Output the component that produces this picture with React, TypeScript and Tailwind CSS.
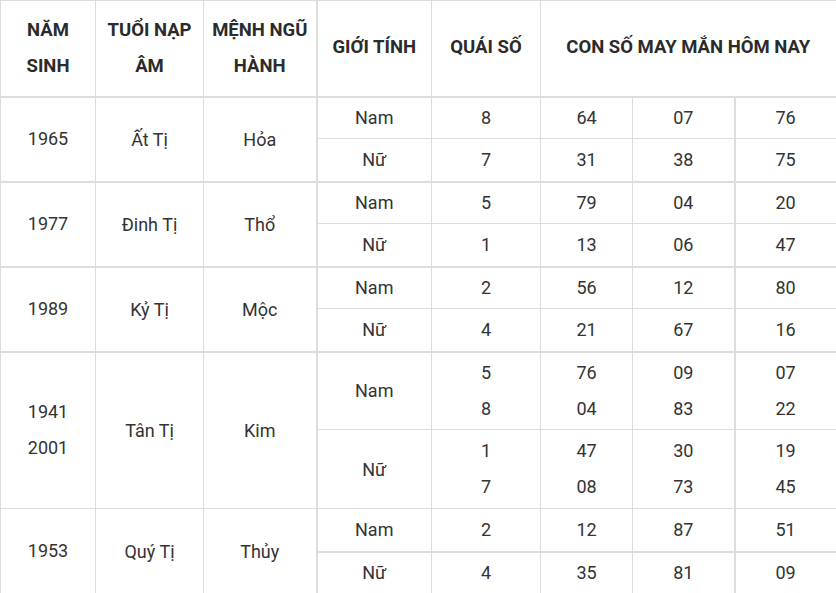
import React from "react";

type Gender = {
  label: string;
  quai: string[];
  nums: string[][];
  h: string;
  thickTop?: boolean;
};

type Group = {
  years: string[];
  napAm: string;
  menh: string;
  thickTop: boolean;
  rows: Gender[];
};

const groups: Group[] = [
  {
    years: ["1965"],
    napAm: "Ất Tị",
    menh: "Hỏa",
    thickTop: true,
    rows: [
      { label: "Nam", quai: ["8"], nums: [["64", "07", "76"]], h: "h-[42px]" },
      { label: "Nữ", quai: ["7"], nums: [["31", "38", "75"]], h: "h-[43px]" }
    ]
  },
  {
    years: ["1977"],
    napAm: "Đinh Tị",
    menh: "Thổ",
    thickTop: true,
    rows: [
      { label: "Nam", quai: ["5"], nums: [["79", "04", "20"]], h: "h-[42px]" },
      { label: "Nữ", quai: ["1"], nums: [["13", "06", "47"]], h: "h-[43px]" }
    ]
  },
  {
    years: ["1989"],
    napAm: "Kỷ Tị",
    menh: "Mộc",
    thickTop: true,
    rows: [
      { label: "Nam", quai: ["2"], nums: [["56", "12", "80"]], h: "h-[42px]" },
      { label: "Nữ", quai: ["4"], nums: [["21", "67", "16"]], h: "h-[43px]" }
    ]
  },
  {
    years: ["1941", "2001"],
    napAm: "Tân Tị",
    menh: "Kim",
    thickTop: true,
    rows: [
      {
        label: "Nam",
        quai: ["5", "8"],
        nums: [
          ["76", "09", "07"],
          ["04", "83", "22"]
        ],
        h: "h-[78px]"
      },
      {
        label: "Nữ",
        quai: ["1", "7"],
        nums: [
          ["47", "30", "19"],
          ["08", "73", "45"]
        ],
        h: "h-[79px]"
      }
    ]
  },
  {
    years: ["1953"],
    napAm: "Quý Tị",
    menh: "Thủy",
    thickTop: false,
    rows: [
      { label: "Nam", quai: ["2"], nums: [["12", "87", "51"]], h: "h-[43px]" },
      { label: "Nữ", quai: ["4"], nums: [["35", "81", "09"]], h: "h-[42px]", thickTop: true }
    ]
  }
];

const cell = "border border-[#dddddd] p-0 text-center align-middle";

function Lines({ items }: { items: string[] }) {
  return (
    <>
      {items.map((t, i) => (
        <div className="leading-[36px]" key={i}>
          {t}
        </div>
      ))}
    </>
  );
}

export default function App() {
  return (
    <div className="w-[836px] bg-white font-['Roboto',sans-serif] text-[18px] text-[#333333]">
      <table className="w-[836px] table-fixed border-collapse">
        <colgroup>
          <col className="w-[95px]" />
          <col className="w-[108px]" />
          <col className="w-[113px]" />
          <col className="w-[115px]" />
          <col className="w-[109px]" />
          <col className="w-[92px]" />
          <col className="w-[102px]" />
          <col className="w-[102px]" />
        </colgroup>
        <thead>
          <tr className="h-[96px] text-[18.5px] font-bold text-[#2b2b2b]">
            <th className={cell}>
              <Lines items={["NĂM", "SINH"]} />
            </th>
            <th className={cell}>
              <Lines items={["TUỔI NẠP", "ÂM"]} />
            </th>
            <th className={cell}>
              <Lines items={["MỆNH NGŨ", "HÀNH"]} />
            </th>
            <th className={`${cell} border-l-2`}>GIỚI TÍNH</th>
            <th className={cell}>QUÁI SỐ</th>
            <th className={`${cell} border-r-2`} colSpan={3}>
              CON SỐ MAY MẮN HÔM NAY
            </th>
          </tr>
        </thead>
        <tbody>
          {groups.map((g) =>
            g.rows.map((r, ri) => {
              const top = (ri === 0 && g.thickTop) || r.thickTop ? "border-t-2" : "";
              return (
                <tr className={r.h} key={g.napAm + r.label}>
                  {ri === 0 ? (
                    <>
                      <td className={`${cell} ${top}`} rowSpan={g.rows.length}>
                        <Lines items={g.years} />
                      </td>
                      <td className={`${cell} ${top}`} rowSpan={g.rows.length}>
                        {g.napAm}
                      </td>
                      <td className={`${cell} ${top}`} rowSpan={g.rows.length}>
                        {g.menh}
                      </td>
                    </>
                  ) : null}
                  <td className={`${cell} ${top} border-l-2`}>{r.label}</td>
                  <td className={`${cell} ${top}`}>
                    <Lines items={r.quai} />
                  </td>
                  {[0, 1, 2].map((c) => (
                    <td
                      className={`${cell} ${top} ${c === 2 ? "border-l-2 border-r-2" : ""}`}
                      key={c}
                    >
                      <Lines items={r.nums.map((n) => n[c])} />
                    </td>
                  ))}
                </tr>
              );
            })
          )}
        </tbody>
      </table>
    </div>
  );
}
